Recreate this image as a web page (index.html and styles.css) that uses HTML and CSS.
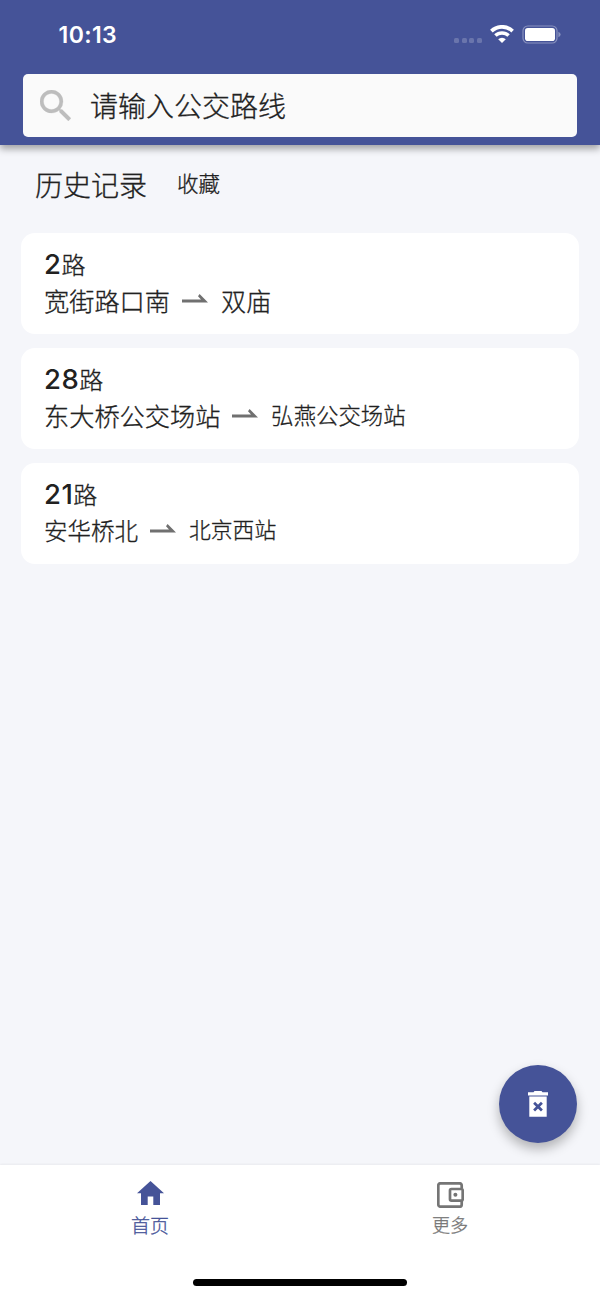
FILE: index.html
```html
<!DOCTYPE html>
<html lang="zh-CN">
<head>
<meta charset="utf-8">
<title>公交路线</title>
<link rel="stylesheet" href="styles.css">
</head>
<body>
<div class="screen">
  <header class="header">
    <div class="status">
      <span class="clock">10:13</span>
      <div class="indicators">
        <div class="signal"><i></i><i></i><i></i><i></i></div>
        <svg class="wifi" viewBox="0 0 24 18" fill="none" stroke="#fff">
          <path d="M1.400 6.100a15.200 15.200 0 0 1 21.200 0" stroke-width="3.700"/>
          <path d="M5.400 10.600a9.500 9.500 0 0 1 13.200 0" stroke-width="3.500"/>
          <path d="M12 18 8.200 14.200a5.500 5.500 0 0 1 7.600 0z" fill="#fff" stroke="none"/>
        </svg>
        <svg class="battery" viewBox="0 0 39 19">
          <rect x="1" y="1" width="34" height="17" rx="4.800" fill="none" stroke="#8992bf" stroke-width="1.200"/>
          <rect x="3" y="3" width="30" height="13" rx="2.800" fill="#fff"/>
          <path d="M36.400 6.700q2.200 1 2.200 2.800t-2.200 2.800z" fill="#8992bf"/>
        </svg>
      </div>
    </div>
    <label class="search">
      <svg class="search-icon" viewBox="3 3 17.500 17.500"><path fill="#bdbdbd" stroke="#bdbdbd" stroke-width=".15" d="M15.500 14h-.79l-.28-.27A6.471 6.471 0 0 0 16 9.500 6.500 6.500 0 1 0 9.500 16c1.610 0 3.090-.59 4.230-1.570l.27.28v.79l5 4.990L20.490 19l-4.990-5zm-6 0C7.010 14 5 11.990 5 9.500S7.010 5 9.500 5 14 7.010 14 9.500 11.990 14 9.500 14z"/></svg>
      <span>请输入公交路线</span>
    </label>
  </header>
  <main class="content">
    <div class="tabs"><span class="tab-active">历史记录</span><span class="tab">收藏</span></div>
    <div class="cards">
      <section class="card">
        <h2><b>2</b>路</h2>
        <div class="route"><span class="from">宽街路口南</span>
          <svg class="arrow" viewBox="0 0 26 9"><path d="M0 5.600h19l-3-3.300L17.600 0 26 8.500H0z"/></svg>
          <span class="to to-large">双庙</span></div>
      </section>
      <section class="card">
        <h2><b>28</b>路</h2>
        <div class="route"><span class="from">东大桥公交场站</span>
          <svg class="arrow" viewBox="0 0 26 9"><path d="M0 5.600h19l-3-3.300L17.600 0 26 8.500H0z"/></svg>
          <span class="to to-medium">弘燕公交场站</span></div>
      </section>
      <section class="card">
        <h2><b>21</b>路</h2>
        <div class="route"><span class="from from-small">安华桥北</span>
          <svg class="arrow" viewBox="0 0 26 9"><path d="M0 5.600h19l-3-3.300L17.600 0 26 8.500H0z"/></svg>
          <span class="to">北京西站</span></div>
      </section>
    </div>
  </main>
  <nav class="nav">
    <div class="nav-items">
      <a class="nav-item selected">
        <svg class="home" viewBox="0 0 27 24"><path fill="currentColor" d="M13.500 0 0 12.200h4V24h6.700v-8.500h5.600V24H23V12.200h4z"/></svg>
        <span>首页</span>
      </a>
      <a class="nav-item">
        <svg class="wallet" viewBox="0 0 27 26" fill="none" stroke="currentColor" stroke-width="2.700">
          <path d="M24.700 6.500V3.500q0-2.200-2.200-2.200h-19Q1.300 1.300 1.300 3.500v19q0 2.200 2.200 2.200h19q2.200 0 2.200-2.200V19"/>
          <rect x="13" y="7" width="12.700" height="11.600" rx="1.400"/>
          <circle cx="18.400" cy="12.800" r="2" fill="currentColor" stroke="none"/>
        </svg>
        <span>更多</span>
      </a>
    </div>
    <div class="home-bar"></div>
  </nav>
  <button class="fab" aria-label="清空">
    <svg viewBox="0 0 20 26"><path fill="#fff" d="M0 1.300h5.500L6.500 0h7l1 1.300H20v3.200H0zM1.300 5.500h17.400v20.200H1.300z"/><path d="m6.100 11.700 7.800 7.800m0-7.800-7.800 7.800" fill="none" stroke="#455398" stroke-width="2.700"/></svg>
  </button>
</div>
</body>
</html>
```
FILE: styles.css
```css
* { box-sizing: border-box; }
body {
  margin: 0;
  background: #f5f6fa;
  color: #212121;
  font-family: "Noto Sans CJK SC", sans-serif;
  font-weight: 300;
  -webkit-text-stroke: .3px currentColor;
}
svg { display: block; flex: none; }
.screen { position: relative; display: flex; flex-direction: column; height: 1298px; overflow: hidden; }
.header {
  flex: none;
  height: 144.500px;
  padding: 0 23px;
  background: #455398;
  box-shadow: 0 4px 7px rgba(0, 0, 0, .34);
}
.status { display: flex; justify-content: space-between; height: 73.500px; padding: 20px 16px 0 35.500px; }
.clock { font: 600 23px/30px Inter, sans-serif; color: #fff; letter-spacing: .4px; -webkit-text-stroke: 0; }
.indicators { display: flex; align-items: center; height: 28px; }
.signal { display: flex; gap: 2.500px; margin: 13px 8.500px 0 0; }
.signal i { width: 5px; height: 5px; border-radius: 1.500px; background: #6a75ac; }
.wifi { width: 24px; height: 18px; margin-right: 8px; }
.battery { width: 39px; height: 19px; }
.search {
  display: flex;
  align-items: center;
  height: 63.500px;
  padding-left: 17px;
  border-radius: 5px;
  background: #fafafa;
  font-size: 28px;
  line-height: 40px;
}
.search-icon { width: 31px; height: 31px; margin-right: 19px; }
.content { flex: 1; padding: 18px 21px 0; }
.tabs { display: flex; height: 70.500px; padding-left: 14px; line-height: 42px; }
.tab-active { font-size: 28px; }
.tab { margin: -1px 0 0 30px; font-size: 21.500px; }
.cards { display: grid; gap: 14.500px; }
.card { height: 100.500px; padding: 12px 23px; border-radius: 14px; background: #fff; }
.card h2 { margin: 0; display: flex; align-items: center; height: 37px; font-size: 24px; line-height: 37px; font-weight: 300; }
.card b { font: 500 27.500px/37px Inter, sans-serif; letter-spacing: .5px; padding-top: 2px; -webkit-text-stroke: 0; }
.route { display: flex; align-items: center; height: 36px; line-height: 36px; }
.from { font-size: 25.200px; }
.from-small { font-size: 23.500px; }
.arrow { width: 26px; height: 9px; margin: -3px 13px 0 12px; fill: #707070; }
.to { margin-top: -2px; font-size: 21.800px; }
.to-large { margin-top: 0; font-size: 25px; }
.to-medium { font-size: 22.400px; }
.nav { flex: none; height: 133px; background: #fff; box-shadow: 0 -1px 2px rgba(0, 0, 0, .05); }
.nav-items { display: flex; height: 114px; }
.nav-item { flex: 1; display: flex; flex-direction: column; align-items: center; padding-top: 17px; font-size: 18px; line-height: 26px; color: #757575; }
.nav-item.selected { padding-top: 16px; font-size: 19px; color: #455398; }
.home { width: 27px; height: 24px; margin-bottom: 7px; }
.wallet { width: 27px; height: 26px; margin-bottom: 3px; }
.home-bar { width: 214px; height: 7px; margin: 0 auto; border-radius: 4px; background: #000; }
.fab {
  position: absolute;
  right: 23px;
  top: 1065px;
  display: grid;
  place-items: center;
  width: 78px;
  height: 78px;
  padding: 0;
  border: 0;
  border-radius: 50%;
  background: #455398;
  box-shadow: 0 6px 12px rgba(0, 0, 0, .28);
}
.fab svg { width: 20px; height: 26px; }
```
